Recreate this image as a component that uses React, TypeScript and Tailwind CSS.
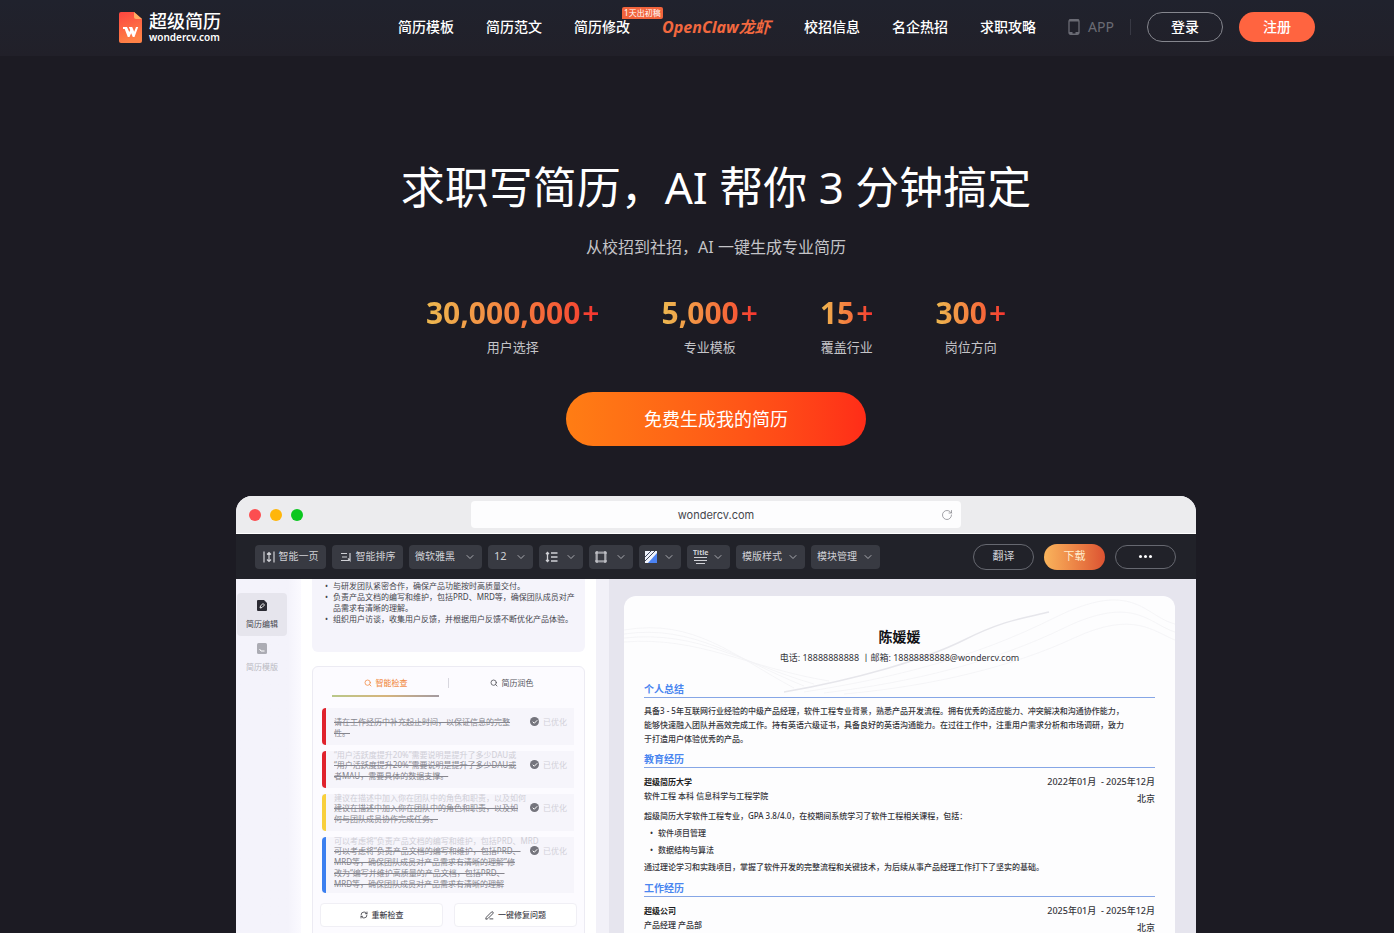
import { ReactNode, useState } from "react"
import { Check, ChevronDown, PenLine, RefreshCw, RotateCw, Search } from "lucide-react"

const stats = [
    { value: "30,000,000", label: "用户选择" },
    { value: "5,000", label: "专业模板" },
    { value: "15", label: "覆盖行业" },
    { value: "300", label: "岗位方向" },
]

const issues = [
    {
        bar: "bg-[#e0222c]",
        pad: "pt-2",
        height: "h-[37px]",
        lines: ["请在工作经历中补充起止时间，以保证信息的完整", "性。"],
    },
    {
        bar: "bg-[#e0222c]",
        height: "h-[37px]",
        ghost: "“用户活跃度提升20%”需要说明是提升了多少DAU或",
        lines: ["“用户活跃度提升20%”需要说明是提升了多少DAU或", "者MAU，需要具体的数据支撑。"],
    },
    {
        bar: "bg-[#f8cf3c]",
        height: "h-[37px]",
        ghost: "建议在描述中加入你在团队中的角色和职责，以及如何",
        lines: ["建议在描述中加入你在团队中的角色和职责，以及如", "何与团队成员协作完成任务。"],
    },
    {
        bar: "bg-[#3b7ff0]",
        height: "h-[56px]",
        ghost: "可以考虑将“负责产品文档的编写和维护，包括PRD、MRD",
        lines: [
            "可以考虑将“负责产品文档的编写和维护，包括PRD、",
            "MRD等，确保团队成员对产品需求有清晰的理解”修",
            "改为“编写并维护高质量的产品文档，包括PRD、",
            "MRD等，确保团队成员对产品需求有清晰的理解",
        ],
    },
]

export default function App() {
    return (
        <div className="flex flex-col h-screen overflow-hidden bg-[#1c1b23] font-['Noto_Sans','Noto_Sans_CJK_SC',sans-serif]">
            <Header />

            <main className="flex flex-col flex-1 min-h-0 items-center pl-[38px]">
                <h1 className="mt-[101px] text-[44px] leading-[60px] text-white whitespace-nowrap">求职写简历，AI 帮你 3 分钟搞定</h1>
                <p className="mt-[18px] text-base leading-6 text-[#c4c4c8]">从校招到社招，AI 一键生成专业简历</p>

                <div className="flex gap-[62px] mt-9">
                    {stats.map((s) => (
                        <Stat key={s.label} value={s.value} label={s.label} />
                    ))}
                </div>

                <button className="mt-[35px] w-[300px] h-[54px] shrink-0 rounded-full bg-linear-to-r from-[#ff7d14] to-[#ff2c18] text-lg text-white cursor-pointer">
                    免费生成我的简历
                </button>

                <div className="flex flex-col flex-1 min-h-0 w-full max-w-[960px] mt-[50px] rounded-t-2xl overflow-hidden bg-[#e6e5ee]">
                    <BrowserBar />
                    <Toolbar />
                    <div className="flex flex-1 min-h-0 overflow-hidden">
                        <SideTabs />
                        <Editor />
                        <div className="w-[13px] shrink-0 bg-[#f2f1f8]" />
                        <Resume />
                    </div>
                </div>
            </main>
        </div>
    )
}

function Header() {
    return (
        <header className="h-14 shrink-0 bg-linear-to-b from-[#20222d] to-[#212029] pl-10">
            <div className="flex items-center justify-between h-[54px] w-full max-w-[1196px] mx-auto">
                <a href="#" className="flex items-center gap-[7px]">
                    <Logo />
                    <span className="flex flex-col text-white">
                        <span className="text-lg leading-5 font-medium">超级简历</span>
                        <span className="text-[10px] leading-3 font-semibold">wondercv.com</span>
                    </span>
                </a>

                <nav className="flex items-center gap-8 text-sm font-medium text-white whitespace-nowrap">
                    <a href="#">简历模板</a>
                    <a href="#">简历范文</a>
                    <a href="#">简历修改</a>
                    <a href="#" className="relative w-[110px] text-base leading-6 font-bold italic text-[#f2683f]">
                        OpenClaw龙虾
                        <span className="absolute -top-2 -left-10 px-0.5 rounded-xs rounded-bl-none bg-[#f2643c] text-[8px] leading-3 font-normal not-italic text-white">1天出初稿</span>
                    </a>
                    <a href="#">校招信息</a>
                    <a href="#">名企热招</a>
                    <a href="#">求职攻略</a>

                    <div className="flex items-center gap-4">
                        <a href="#" className="flex items-center gap-2 font-normal text-[#6a6b74]">
                            <svg width="12" height="16" viewBox="0 0 12 16" fill="none" stroke="currentColor" aria-hidden="true">
                                <rect x="1" y="0.750" width="10" height="14.500" rx="1.500" strokeWidth="1.300" />
                                <path d="M1 1.500h10M1 14h3.500M7.500 14H11" strokeWidth="2" />
                            </svg>
                            APP
                        </a>
                        <span className="w-px h-4 bg-[#383944]" />
                        <button className="w-[76px] h-[30px] rounded-full border border-[#85868e] cursor-pointer">登录</button>
                        <button className="w-[76px] h-[30px] rounded-full bg-[#ff6440] cursor-pointer">注册</button>
                    </div>
                </nav>
            </div>
        </header>
    )
}

function Logo() {
    return (
        <svg width="23" height="31" viewBox="0 0 23 31" aria-hidden="true">
            <defs>
                <linearGradient id="logo" x1="0" y1="0" x2="0.3" y2="1">
                    <stop offset="0" stopColor="#fb4540" />
                    <stop offset="1" stopColor="#ff8146" />
                </linearGradient>
            </defs>
            <path d="M2 0h13l8 7v22a2 2 0 0 1-2 2H2a2 2 0 0 1-2-2V2a2 2 0 0 1 2-2z" fill="url(#logo)" />
            <path d="M15 0l8 7h-6a2 2 0 0 1-2-2z" fill="#ffad62" />
            <path d="M4 15h4l2.300 5 0.900-2L9.800 15h3.400l2 4.800L17 15h2.200L15.500 25h-1.700l-1.600-3.700L10.500 25H8.800L5.700 17H4z" fill="#fff" />
        </svg>
    )
}

function Stat({ value, label }: { value: string, label: string }) {
    return (
        <div className="flex flex-col items-center gap-1.5">
            <div className="flex gap-0.5 text-3xl leading-9 font-bold text-transparent bg-clip-text bg-linear-to-r from-[#ecb850] to-[#f5302f]">
                <span>{value}</span>
                <span className="font-semibold">+</span>
            </div>
            <span className="text-[13px] leading-5 text-[#c4c4c8]">{label}</span>
        </div>
    )
}

function BrowserBar() {
    return (
        <div className="flex items-center h-[38px] shrink-0 px-[13px] bg-[#ececee] border-b border-white">
            <div className="flex flex-1 gap-[9px]">
                <span className="size-3 rounded-full bg-[#fc4e50]" />
                <span className="size-3 rounded-full bg-[#ffb60a]" />
                <span className="size-3 rounded-full bg-[#0bc71f]" />
            </div>
            <div className="flex items-center justify-end w-[490px] h-[27px] px-2 rounded bg-[#fdfdfe]">
                <span className="flex-1 pt-px pl-3 text-center text-[11px] leading-4 text-[#46474d] font-[Inter]">wondercv.com</span>
                <RotateCw size={12} strokeWidth={1.500} className="text-[#85868c]" />
            </div>
            <div className="flex-1" />
        </div>
    )
}

function ToolButton({ width, arrow = true, children }: { width: string, arrow?: boolean, children: ReactNode }) {
    return (
        <button className={`flex items-center h-6 px-1.5 rounded-sm bg-[#383a42] ${arrow ? "justify-between" : "justify-center gap-1"} ${width}`}>
            {children}
            {arrow && <ChevronDown size={12} strokeWidth={2} className="text-[#a9aab0]" />}
        </button>
    )
}

function Toolbar() {
    return (
        <div className="flex items-center justify-between h-[45px] shrink-0 pl-[19px] pr-5 bg-[#212229] text-[10px] text-[#d0d1d6] whitespace-nowrap">
            <div className="flex gap-1.5">
                <ToolButton width="w-[71px]" arrow={false}>
                    <svg width="12" height="12" viewBox="0 0 12 12" fill="none" stroke="currentColor" strokeWidth="1.200">
                        <path d="M1 0.500v11M11 0.500v11M6 1.500v9M4 3.500l2-2 2 2M4 8.500l2 2 2-2" />
                    </svg>
                    智能一页
                </ToolButton>
                <ToolButton width="w-[71px]" arrow={false}>
                    <svg width="12" height="12" viewBox="0 0 12 12" fill="none" stroke="currentColor" strokeWidth="1.200">
                        <path d="M1 2.500h6M2 6h5M1 9.500h8M10 2v7.500l-2-2" />
                    </svg>
                    智能排序
                </ToolButton>
                <ToolButton width="w-[73px]">微软雅黑</ToolButton>
                <ToolButton width="w-[45px]"><span className="text-[11px]">12</span></ToolButton>
                <ToolButton width="w-[44px]">
                    <svg width="13" height="12" viewBox="0 0 13 12" fill="none" stroke="currentColor" strokeWidth="1.300">
                        <path d="M2.500 1.500v9M1 3l1.500-1.500L4 3M1 9l1.500 1.500L4 9M6 2h6.500M6 6h6.500M6 10h6.500" />
                    </svg>
                </ToolButton>
                <ToolButton width="w-[44px]">
                    <svg width="12" height="12" viewBox="0 0 12 12" fill="none" stroke="currentColor" strokeWidth="1.200">
                        <path d="M0 2h12M0 10h12M2 0v12M10 0v12" />
                        <path d="M1 1h10v10H1z" strokeOpacity="0.600" />
                    </svg>
                </ToolButton>
                <ToolButton width="w-[42px]">
                    <svg width="12" height="12" viewBox="0 0 12 12">
                        <path d="M0 0h12v12H0z" fill="#eef2fb" />
                        <path d="M12 2v10H3z" fill="#4b82f2" />
                        <path d="M0 6l6-6M0 10L10 0" stroke="#3f475c" strokeWidth="1" />
                    </svg>
                </ToolButton>
                <ToolButton width="w-[43px]">
                    <span className="flex flex-col items-center gap-px">
                        <span className="text-[7px] leading-[7px] font-bold">Title</span>
                        <svg width="13" height="7" viewBox="0 0 13 7" stroke="currentColor" strokeWidth="1">
                            <path d="M0 0.500h13M0 3.500h13M2 6.500h9" />
                        </svg>
                    </span>
                </ToolButton>
                <ToolButton width="w-[69px]">模版样式</ToolButton>
                <ToolButton width="w-[69px]">模块管理</ToolButton>
            </div>
            <div className="flex items-center gap-2.5">
                <button className="w-[61px] h-[26px] rounded-full border border-[#666870] text-[11px]">翻译</button>
                <button className="w-[61px] h-[26px] rounded-full bg-linear-to-r from-[#f9b45c] to-[#dc5232] text-[11px] text-[#ffeccb]">下载</button>
                <button aria-label="更多" className="flex items-center justify-center gap-0.5 w-[61px] h-6 rounded-full border border-[#666870]">
                    <span className="size-[3px] rounded-full bg-white" />
                    <span className="size-[3px] rounded-full bg-white" />
                    <span className="size-[3px] rounded-full bg-white" />
                </button>
            </div>
        </div>
    )
}

function SideTabs() {
    return (
        <div className="flex flex-col w-[65px] shrink-0 pt-3.5 pl-px bg-linear-to-r from-[#f4f3fb] from-80% to-[#fbfaff]">
            <button className="flex flex-col items-center gap-2 w-[50px] h-[43px] pt-[7px] rounded bg-[#e6e5ed] text-[8px] leading-[10px] text-[#46464e]">
                <svg width="10" height="11" viewBox="0 0 10 11">
                    <path d="M1 0h6l3 3v7a1 1 0 0 1-1 1H1a1 1 0 0 1-1-1V1a1 1 0 0 1 1-1z" fill="#2b2b33" />
                    <path d="M3 8l0.500-2L6 3.500 7.500 5 5 7.500z" fill="none" stroke="#fff" strokeWidth="0.900" />
                </svg>
                简历编辑
            </button>
            <button className="flex flex-col items-center gap-2 w-[50px] h-[43px] pt-[7px] text-[8px] leading-[10px] text-[#b9b9c1]">
                <svg width="10" height="11" viewBox="0 0 10 11">
                    <rect width="10" height="11" rx="1.500" fill="#acacb4" />
                    <path d="M2.500 6l1.500 2 3.500 0" fill="none" stroke="#fff" strokeWidth="1" />
                </svg>
                简历模版
            </button>
        </div>
    )
}

function Bullet({ children }: { children: ReactNode }) {
    return (
        <li className="flex">
            <span className="w-2 shrink-0">•</span>
            <span>{children}</span>
        </li>
    )
}

function Editor() {
    const [tab, setTab] = useState<number>(1);

    return (
        <div className="flex flex-col w-[295px] shrink-0 gap-3.5 px-[11px] bg-white whitespace-nowrap">
            <ul className="h-[73px] shrink-0 pt-px pl-[13px] rounded-b-md bg-[#f5f4fb] text-[8px] leading-[11px] text-[#44444c]">
                <Bullet>与研发团队紧密合作，确保产品功能按时高质量交付。</Bullet>
                <Bullet>负责产品文档的编写和维护，包括PRD、MRD等，确保团队成员对产<br />品需求有清晰的理解。</Bullet>
                <Bullet>组织用户访谈，收集用户反馈，并根据用户反馈不断优化产品体验。</Bullet>
            </ul>

            <div className="flex flex-col shrink-0 h-[300px] rounded-md border border-[#ecebf3] bg-[#fcfbff] text-[8px]">
                <div className="flex items-center h-8 shrink-0 pl-[19px] pr-2.5">
                    <button
                        className={`flex items-center justify-center gap-1 w-[107px] h-8 font-medium ${tab === 1 ? "text-[#f2924f]" : "text-[#55555d]"}`}
                        onClick={() => setTab(1)}
                    >
                        <Search size={8} strokeWidth={2.500} />
                        智能检查
                    </button>
                    <span className="w-px h-2.5 ml-[9px] bg-[#d8d7df]" />
                    <button
                        className={`flex flex-1 items-center justify-center gap-1 h-8 ${tab === 2 ? "text-[#f2924f]" : "text-[#55555d]"}`}
                        onClick={() => setTab(2)}
                    >
                        <Search size={8} strokeWidth={2.500} />
                        简历润色
                    </button>
                </div>
                <div className={`w-[107px] h-0.5 shrink-0 -mt-1 bg-linear-to-r from-[#b9c88a] via-[#d6b47c] to-[#a39aa0] ${tab === 1 ? "ml-[19px]" : "ml-[144px]"}`} />

                <div className="flex flex-col gap-1.5 mt-[11px] ml-[9px] mr-2.5">
                    {issues.map((issue) => (
                        <div key={issue.lines[1]} className={`flex shrink-0 bg-[#f6f5fb] ${issue.height}`}>
                            <span className={`w-1 shrink-0 rounded-l-sm ${issue.bar}`} />
                            <div className={`flex-1 pl-2 leading-[11px] text-[#86868e] ${issue.pad ?? ""}`}>
                                {issue.ghost && <div className="leading-2 text-[#cfced6]">{issue.ghost}</div>}
                                <div className="flex">
                                    <div className="w-[196px] line-through">
                                        {issue.lines.map((line) => <div key={line}>{line}</div>)}
                                    </div>
                                    <span className="flex items-center gap-1 h-[11px] text-[#d2d1d9]">
                                        <span className="flex items-center justify-center size-[9px] rounded-full bg-[#74747c]">
                                            <Check size={6} strokeWidth={4} className="text-white" />
                                        </span>
                                        已优化
                                    </span>
                                </div>
                            </div>
                        </div>
                    ))}
                </div>

                <div className="flex gap-[11px] mt-2.5 mx-[7px] font-medium text-[#44444c]">
                    <button className="flex flex-1 items-center justify-center gap-1 h-6 rounded-sm border border-[#f0eff5] bg-white">
                        <RefreshCw size={8} strokeWidth={2.500} />
                        重新检查
                    </button>
                    <button className="flex flex-1 items-center justify-center gap-1 h-6 rounded-sm border border-[#f0eff5] bg-white">
                        <PenLine size={9} strokeWidth={2.500} />
                        一键修复问题
                    </button>
                </div>
            </div>
        </div>
    )
}

function SectionTitle({ children }: { children: ReactNode }) {
    return <h3 className="h-[17px] mt-[5px] border-b border-[#86a6e6] text-[10px] leading-4 font-bold text-[#4a86f0]">{children}</h3>
}

function Entry({ name, detail, date }: { name: string, detail: string, date: string }) {
    return (
        <div className="flex justify-between pt-[5px]">
            <div className="pt-0.5 leading-[14px]">
                <div className="font-bold text-[#1c1c20]">{name}</div>
                <div>{detail}</div>
            </div>
            <div className="text-[9px] leading-[17px] text-right whitespace-pre">
                <div>{date}</div>
                <div>北京</div>
            </div>
        </div>
    )
}

function Resume() {
    return (
        <div className="flex-1 min-w-0 pt-[17px] pl-[15px] pr-[21px]">
            <article className="relative px-5 pt-8 pb-6 rounded-xl bg-[#fdfdfe] text-[8px] font-medium text-[#36363c] whitespace-nowrap">
                <Waves />
                <div className="relative">
                    <h2 className="text-center text-sm leading-[18px] font-bold text-[#111114]">陈媛媛</h2>
                    <p className="mt-1.5 text-center text-[9px] leading-3 font-normal">电话: 18888888888 丨邮箱: 18888888888@wondercv.com</p>

                    <div className="pt-3">
                        <SectionTitle>个人总结</SectionTitle>
                    </div>
                    <p className="pt-1.5 leading-[14px]">
                        具备3 - 5年互联网行业经验的中级产品经理，软件工程专业背景，熟悉产品开发流程。拥有优秀的适应能力、冲突解决和沟通协作能力，<br />
                        能够快速融入团队并高效完成工作。持有英语六级证书，具备良好的英语沟通能力。在过往工作中，注重用户需求分析和市场调研，致力<br />
                        于打造用户体验优秀的产品。
                    </p>

                    <SectionTitle>教育经历</SectionTitle>
                    <Entry name="超级简历大学" detail="软件工程 本科 信息科学与工程学院" date="2022年01月  - 2025年12月" />
                    <div className="leading-[17px]">
                        <p>超级简历大学软件工程专业，GPA 3.8/4.0，在校期间系统学习了软件工程相关课程，包括：</p>
                        <ul className="pl-1.5">
                            <Bullet>软件项目管理</Bullet>
                            <Bullet>数据结构与算法</Bullet>
                        </ul>
                        <p>通过理论学习和实践项目，掌握了软件开发的完整流程和关键技术，为后续从事产品经理工作打下了坚实的基础。</p>
                    </div>

                    <SectionTitle>工作经历</SectionTitle>
                    <Entry name="超级公司" detail="产品经理 产品部" date="2025年01月  - 2025年12月" />
                </div>
            </article>
        </div>
    )
}

// faint wave pattern behind the resume header
function Waves() {
    return (
        <svg className="absolute inset-x-0 top-0 w-full h-[110px]" viewBox="0 0 551 110" preserveAspectRatio="none" fill="none" stroke="#f2f2f5" strokeWidth="0.800" aria-hidden="true">
            <path d="M160 96C230 84 300 64 340 44S400 22 425 16" stroke="#e6e6eb" strokeWidth="1.500" />
            <path d="M0 34C70 22 110 60 170 92" />
            <path d="M0 38C70 28 115 64 180 90" />
            <path d="M0 42C75 34 120 68 190 88" />
            <path d="M0 46C75 40 125 72 205 85" />
            <path d="M180 96C270 82 350 62 430 22S520 20 551 28" />
            <path d="M200 97C290 86 370 66 440 32S525 28 551 36" />
            <path d="M220 98C310 90 390 70 450 42S530 36 551 44" />
        </svg>
    )
}
